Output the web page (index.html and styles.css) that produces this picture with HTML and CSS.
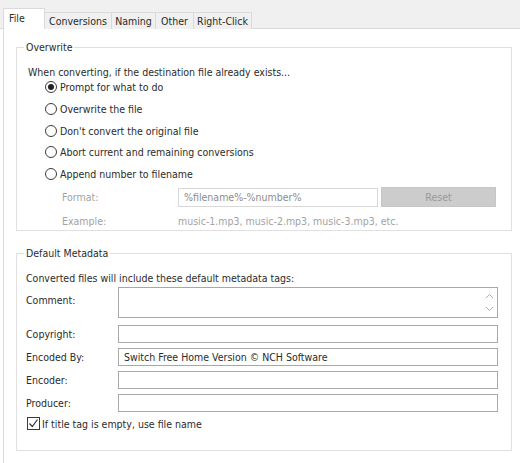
FILE: index.html
```html
<!DOCTYPE html>
<html lang="en">
<head>
<meta charset="utf-8">
<title>Options</title>
<link rel="stylesheet" href="styles.css">
</head>
<body>
<div class="tabs">
  <div class="tab active">File</div>
  <div class="tab">Conversions</div>
  <div class="tab">Naming</div>
  <div class="tab">Other</div>
  <div class="tab">Right-Click</div>
</div>
<div class="panel">
  <fieldset class="group overwrite">
    <legend>Overwrite</legend>
    <p class="intro">When converting, if the destination file already exists...</p>
    <ul class="radios">
      <li><span class="radio checked"></span>Prompt for what to do</li>
      <li><span class="radio"></span>Overwrite the file</li>
      <li><span class="radio"></span>Don't convert the original file</li>
      <li><span class="radio"></span>Abort current and remaining conversions</li>
      <li><span class="radio"></span>Append number to filename</li>
    </ul>
    <div class="format">
      <span class="muted">Format:</span>
      <div class="field small">%filename%-%number%</div>
      <div class="button disabled">Reset</div>
      <span class="muted example-label">Example:</span>
      <span class="muted example">music-1.mp3, music-2.mp3, music-3.mp3, etc.</span>
    </div>
  </fieldset>

  <fieldset class="group meta">
    <legend>Default Metadata</legend>
    <p class="intro">Converted files will include these default metadata tags:</p>
    <div class="tags">
      <span class="tag-label top">Comment:</span>
      <div class="field area">
        <span class="spin">
          <svg width="9" height="6" viewBox="0 0 9 6"><path d="M1 5 L4.5 1.5 L8 5" fill="none" stroke="#b0b0b0" stroke-width="1"/></svg>
          <svg width="9" height="6" viewBox="0 0 9 6"><path d="M1 1 L4.5 4.5 L8 1" fill="none" stroke="#b0b0b0" stroke-width="1"/></svg>
        </span>
      </div>
      <span class="tag-label">Copyright:</span>
      <div class="field"></div>
      <span class="tag-label">Encoded By:</span>
      <div class="field">Switch Free Home Version © NCH Software</div>
      <span class="tag-label">Encoder:</span>
      <div class="field"></div>
      <span class="tag-label">Producer:</span>
      <div class="field"></div>
    </div>
    <label class="check">
      <span class="box">
        <svg width="11" height="11" viewBox="0 0 11 11"><path d="M1.5 5.5 L4.3 8.5 L9.5 1.5" fill="none" stroke="#333" stroke-width="1.2"/></svg>
      </span>If title tag is empty, use file name
    </label>
  </fieldset>
</div>
</body>
</html>
```

FILE: styles.css
```css
* { box-sizing: border-box; }

html, body {
  margin: 0;
  padding: 0;
  height: 100%;
}

body {
  font-family: "DejaVu Sans Condensed", "DejaVu Sans", sans-serif;
  font-size: 10.5px;
  color: #2b2b2b;
  background: #ffffff;
  display: flex;
  flex-direction: column;
}

/* tab strip */
.tabs {
  height: 29px;
  background: #f0f0f0;
  display: flex;
  align-items: flex-end;
  padding-left: 3px;
  border-bottom: 1px solid #dadada;
}

.tab {
  height: 17px;
  margin-bottom: -1px;
  padding: 0 3px;
  line-height: 16px;
  white-space: nowrap;
  text-align: center;
  border: 1px solid #dadada;
  border-bottom: none;
  border-left: none;
  background: #f0f0f0;
  flex: none;
}

.tab.active {
  height: 21px;
  width: 42px;
  line-height: 19px;
  padding-left: 5px;
  text-align: left;
  background: #ffffff;
  border-left: 1px solid #dadada;
  position: relative;
  z-index: 1;
}

.tab:nth-child(2) { width: 67px; }
.tab:nth-child(3) { width: 44px; }
.tab:nth-child(4) { width: 38px; }
.tab:nth-child(5) { width: 58px; }

.panel {
  flex: 1;
  margin-left: 3px;
  border-left: 1px solid #dadada;
  background: #ffffff;
}

/* group boxes */
.group {
  margin: 11px 8px 0 12px;
  padding: 0 13px 0 9px;
  border: 1px solid #e0e0e0;
  min-inline-size: 0;
}

.group legend {
  padding: 0 2px;
  margin-left: -2px;
  line-height: 14px;
}

.intro {
  margin: 11px 0 0;
  line-height: 14px;
}

.overwrite .intro { margin-left: 2px; }

.radios {
  list-style: none;
  margin: 0;
  padding: 0 0 0 19px;
  display: flex;
  flex-direction: column;
  gap: 5.75px;
}

.radios li {
  height: 16px;
  display: flex;
  align-items: center;
  gap: 3px;
}

.radio {
  width: 12px;
  height: 12px;
  border: 1px solid #3a3a3a;
  border-radius: 50%;
  background: #fff;
  display: flex;
  align-items: center;
  justify-content: center;
}

.radio.checked::after {
  content: "";
  width: 6px;
  height: 6px;
  border-radius: 50%;
  background: #222;
}

.format {
  margin: 5px 0 0 36px;
  display: grid;
  grid-template-columns: 113px 200px 115px;
  column-gap: 3px;
  row-gap: 7px;
  align-items: center;
  padding-bottom: 2px;
}

.muted { color: #a2a2a2; }

.example-label { line-height: 14px; }
.example { grid-column: 2 / 4; line-height: 14px; }

.field {
  height: 18px;
  border: 1px solid #a8a8a8;
  background: #fff;
  padding: 0 5px;
  line-height: 16px;
  white-space: nowrap;
}

.field.small {
  height: 19px;
  border-color: #d8d8d8;
  line-height: 17px;
  color: #8c8c8c;
}

.button {
  height: 20px;
  text-align: center;
  background: #cccccc;
  border: 1px solid #c6c6c6;
  line-height: 18px;
}

.button.disabled { color: #9a9a9a; }

.meta { margin-top: 15px; padding-bottom: 20px; }

.meta .intro { margin-top: 11px; }

.tags {
  margin-top: 2px;
  display: grid;
  grid-template-columns: 92px 380px;
  row-gap: 5px;
  align-items: center;
}

.tag-label { line-height: 14px; }
.tag-label.top { align-self: start; padding-top: 6px; }

.field.area {
  height: 31px;
  margin-bottom: 2px;
  position: relative;
}

.spin {
  position: absolute;
  right: 3px;
  top: 5px;
  display: flex;
  flex-direction: column;
  gap: 7px;
}

.spin svg { display: block; }

.check {
  margin-top: 5px;
  margin-left: 1px;
  display: flex;
  align-items: center;
  gap: 2px;
  height: 13px;
}

.box {
  width: 13px;
  height: 13px;
  border: 1px solid #3a3a3a;
  display: flex;
  align-items: center;
  justify-content: center;
}

.box svg { display: block; }
```
